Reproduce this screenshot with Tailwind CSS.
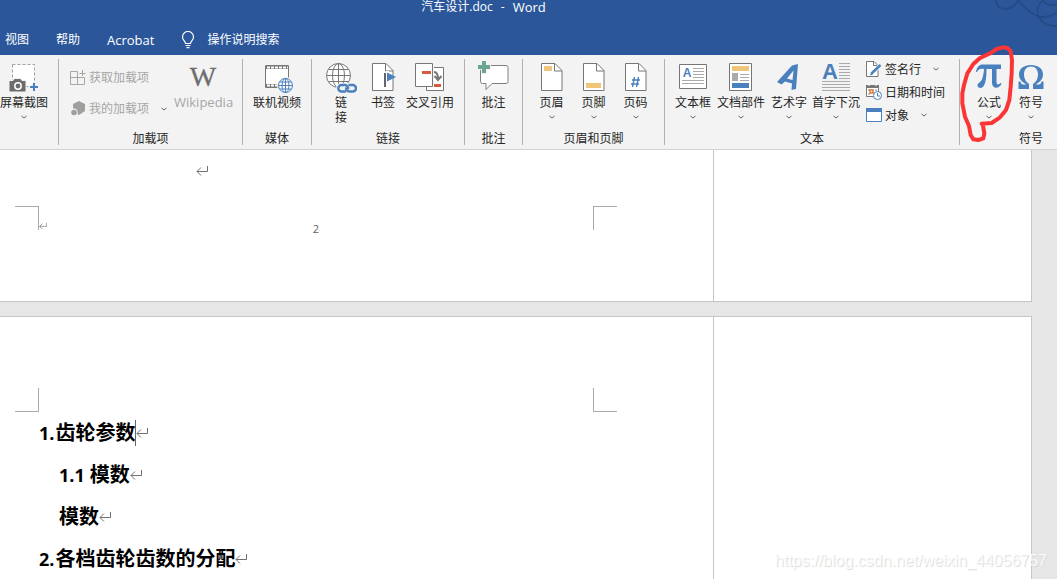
<!DOCTYPE html>
<html lang="zh-CN">
<head>
<meta charset="utf-8">
<meta name="viewport" content="width=device-width, initial-scale=1">
<title>汽车设计.doc - Word</title>
<script src="https://cdn.jsdelivr.net/npm/@tailwindcss/browser@4"></script>
</head>
<body class="relative flex h-screen flex-col overflow-hidden bg-[#e6e6e6] font-['Open_Sans','Noto_Sans_CJK_SC',sans-serif] text-xs text-[#262626]">

<svg class="hidden" aria-hidden="true">
  <symbol id="chev" viewBox="0 0 8 6"><path d="M1.500 2 4 4 6.500 2" fill="none" stroke="#666"/></symbol>
  <symbol id="ret" viewBox="0 0 12 12"><path d="M11.500 1v5.500H1M5 2.500 1 6.500l4 4" fill="none" stroke="#707070"/></symbol>
  <symbol id="page" viewBox="0 0 32 32"><path d="M5.500 2.500H19l7 7V29.500H5.500Z" fill="#fff" stroke="#777"/><path d="M18.500 2.500v7.500H26" fill="none" stroke="#777"/></symbol>
</svg>

<header class="relative h-[55px] shrink-0 overflow-hidden bg-[#2b579a] text-white">
  <svg class="absolute right-0 top-0 h-7 w-16" viewBox="0 0 64 28" fill="none" stroke="#244b86" stroke-width="1.800" aria-hidden="true">
    <path d="M3 0C3 6 7 9 13 9S24 4 25 0M25 0C32 9 42 17 50 17S60 15 64 13M50 0C40 10 44 26 64 26M50 0C52 5 59 6 64 4"/>
  </svg>
  <h1 class="flex h-[14px] items-center justify-center gap-2 pr-[90px] leading-[14px]"><span>汽车设计.doc</span><span>-</span><span class="text-[13px]">Word</span></h1>
  <nav class="flex items-center pl-[5px] pt-[17px] leading-[18px]">
    <button class="mr-[27px]">视图</button>
    <button class="mr-[27px]">帮助</button>
    <button class="mr-[27px] text-[13px]">Acrobat</button>
    <button class="flex items-center gap-3">
      <svg class="h-[18px] w-[14px]" viewBox="0 0 14 18" fill="none" stroke="#fff" stroke-width="1.200"><path d="M4.500 12.500C4.500 10 1.500 9.500 1.500 6a5.500 5.500 0 0 1 11 0c0 3.500-3 4-3 6.500ZM4.500 14.500h5M5.500 16.700h3"/></svg>
      操作说明搜索
    </button>
  </nav>
</header>

<section class="flex h-[95px] shrink-0 overflow-hidden border-b border-[#d2d2d2] bg-[#f3f3f3] py-1 leading-[15px]" aria-label="插入">

  <div class="flex w-[59px] shrink-0 flex-col border-r border-[#b1b1b1] pt-0.5">
    <button class="flex w-12 flex-col items-center gap-0.5 whitespace-nowrap">
      <svg class="size-8" viewBox="0 0 32 32"><path d="M4.500 3.500h22v22h-22z" fill="#fff" stroke="#a0a0a0" stroke-dasharray="3 2"/><path d="M1 19.500h4l1.500-2h6l1.500 2h4V31H1z" fill="#6d6d6d" stroke="#f3f3f3"/><circle cx="10" cy="25" r="3.200" fill="#6d6d6d" stroke="#fff" stroke-width="1.500"/><path d="M26 21.500v9M21.500 26h9" stroke="#f3f3f3" stroke-width="4"/><path d="M26 22v8M22 26h8" stroke="#4a80bd" stroke-width="2"/></svg>
      <span>屏幕截图</span>
      <svg class="mt-0.5 h-1.5 w-2"><use href="#chev"/></svg>
    </button>
  </div>

  <div class="flex w-[184px] shrink-0 flex-col border-r border-[#b1b1b1] pl-[11px] pt-0.5 text-[#a6a6a6]">
    <div class="flex">
      <div class="flex w-[104px] flex-col gap-4 pt-[9px]">
        <button class="flex items-center gap-[3px]" disabled>
          <svg class="h-[15px] w-4" viewBox="0 0 16 15" fill="none" stroke="#a6a6a6"><path d="M.500 1.500h7v13h-7zM.500 7.500h14M7.500 14.500h7v-7M12.500 0v6M9.500 3.500h6"/></svg>
          获取加载项
        </button>
        <button class="flex items-center gap-[3px]" disabled>
          <svg class="h-[15px] w-4" viewBox="0 0 16 15" fill="#a09e9f"><path d="M9 0l6 3v7l-6 4-1.500-1A4 4 0 0 0 3 7.500V3Z"/><circle cx="4" cy="11.500" r="2.800"/></svg>
          我的加载项
          <svg class="ml-2 h-1.5 w-2"><use href="#chev"/></svg>
        </button>
      </div>
      <button class="flex flex-col items-center gap-0.5" disabled>
        <svg class="size-8" viewBox="0 0 32 32"><text x="15" y="25" text-anchor="middle" font-family="Liberation Serif, serif" font-size="28" fill="#6d6d6d" stroke="#6d6d6d" stroke-width="0.300">W</text></svg>
        <span class="text-[13px]">Wikipedia</span>
      </button>
    </div>
    <h2 class="mt-auto pr-[11px] text-center leading-[13px] text-[#262626]">加载项</h2>
  </div>

  <div class="flex w-[69px] shrink-0 flex-col items-center border-r border-[#b1b1b1] pt-0.5">
    <button class="flex flex-col items-center gap-0.5">
      <svg class="size-8" viewBox="0 0 32 32"><path d="M4.500 4.500h23v22h-23z" fill="#fff" stroke="#777"/><path d="M5 6.500h22M5 24.500h22" stroke="#777" stroke-width="3"/><path d="M6 6.500h21M6 24.500h21" stroke="#fff" stroke-width="2" stroke-dasharray="3 1"/><circle cx="24.500" cy="24.500" r="8.500" fill="#f3f3f3"/><g fill="#fff" stroke="#4a80bd"><circle cx="24.500" cy="24.500" r="7"/><ellipse cx="24.500" cy="24.500" rx="3.500" ry="7"/><path d="M24.500 17.500v14M17.500 24.500h14M18.500 21h12M18.500 28h12" fill="none"/></g></svg>
      <span>联机视频</span>
    </button>
    <h2 class="mt-auto leading-[13px]">媒体</h2>
  </div>

  <div class="flex w-[153px] shrink-0 flex-col border-r border-[#b1b1b1] pt-0.5">
    <div class="flex pl-[13px]">
      <button class="flex w-8 flex-col items-center gap-0.5">
        <svg class="size-8" viewBox="0 0 32 32" fill="none"><g stroke="#777"><circle cx="13.500" cy="14.500" r="12" fill="#fff"/><ellipse cx="13.500" cy="14.500" rx="6" ry="12"/><path d="M13.500 2.500v24M1.500 14.500h24M3.500 8.500h20M3.500 20.500h20"/></g><path d="M16 22h12a5.500 5.500 0 0 1 0 11H17a5.500 5.500 0 0 1-1-11" fill="#f3f3f3"/><g stroke="#4a80bd" stroke-width="2.500"><path d="M21 30.500h-4.500a3.200 3.200 0 0 1 0-6.400H20a3.200 3.200 0 0 1 3 4"/><path d="M23.500 24.100h4.300a3.200 3.200 0 0 1 0 6.400h-3.500a3.200 3.200 0 0 1-3-4"/></g></svg>
        <span class="w-3">链接</span>
      </button>
      <button class="ml-[10px] flex w-8 flex-col items-center gap-0.5">
        <svg class="size-8" viewBox="0 0 32 32"><use href="#page"/><path d="M19 10h3v18h-3z" fill="#fff"/><path d="M17 12h2v14h-2z" fill="#666"/><path d="M20 11.500l9 4.500-9 4.500z" fill="#4a80bd"/></svg>
        <span>书签</span>
      </button>
      <button class="ml-[7px] flex w-12 flex-col items-center gap-0.5">
        <svg class="size-8" viewBox="0 0 32 32"><path d="M12.500 6.500h17v23h-17z" fill="#fff" stroke="#777"/><path d="M1.500 2.500h17v23h-17z" fill="#fff" stroke="#777"/><path d="M19.500 2v24" stroke="#f3f3f3"/><path d="M8 10h9v3H8zM20 23h7v3h-7z" fill="#d75b3f"/><path d="M20 11c3.500 0 4 3 4 7M20.500 15l3.500 4 3.500-4" fill="none" stroke="#777" stroke-width="2"/></svg>
        <span>交叉引用</span>
      </button>
    </div>
    <h2 class="mt-auto text-center leading-[13px]">链接</h2>
  </div>

  <div class="flex w-[58px] shrink-0 flex-col items-center border-r border-[#b1b1b1] pt-0.5">
    <button class="flex flex-col items-center gap-0.5">
      <svg class="size-8" viewBox="0 0 32 32"><path d="M4 4.500h24a2 2 0 0 1 2 2v14a2 2 0 0 1-2 2H14l-6 6v-6H4.500a2 2 0 0 1-2-2v-14Z" fill="#fff" stroke="#808080"/><path d="M6 -1v14M-1 6h14" stroke="#f3f3f3" stroke-width="6"/><path d="M6 0v12M0 6h12" stroke="#6ca593" stroke-width="4"/></svg>
      <span>批注</span>
    </button>
    <h2 class="mt-auto leading-[13px]">批注</h2>
  </div>

  <div class="flex w-[142px] shrink-0 flex-col border-r border-[#b1b1b1] pt-0.5">
    <div class="flex justify-center">
      <button class="flex w-[42px] flex-col items-center gap-0.5">
        <svg class="size-8" viewBox="0 0 32 32"><use href="#page"/><path d="M8 5h8v5H8z" fill="#efc579"/></svg>
        <span>页眉</span>
        <svg class="mt-0.5 h-1.5 w-2"><use href="#chev"/></svg>
      </button>
      <button class="flex w-[42px] flex-col items-center gap-0.5">
        <svg class="size-8" viewBox="0 0 32 32"><use href="#page"/><path d="M8 22h15v5H8z" fill="#efc579"/></svg>
        <span>页脚</span>
        <svg class="mt-0.5 h-1.5 w-2"><use href="#chev"/></svg>
      </button>
      <button class="flex w-[42px] flex-col items-center gap-0.5">
        <svg class="size-8" viewBox="0 0 32 32"><use href="#page"/><path d="M14.500 16l-2 10M18.500 16l-2 10M12 19h8M11 23h8" stroke="#4a80bd" stroke-width="1.400"/></svg>
        <span>页码</span>
        <svg class="mt-0.5 h-1.5 w-2"><use href="#chev"/></svg>
      </button>
    </div>
    <h2 class="mt-auto text-center leading-[13px]">页眉和页脚</h2>
  </div>

  <div class="flex w-[295px] shrink-0 flex-col border-r border-[#b1b1b1] pt-0.5">
    <div class="flex pl-1">
      <button class="flex w-12 flex-col items-center gap-0.5">
        <svg class="size-8" viewBox="0 0 32 32"><path d="M2.500 3.500h27v24h-27z" fill="#fff" stroke="#777"/><path d="M16 7.500h11M16 10.500h11M16 13.500h11M16 16.500h11M5 19.500h22M5 22.500h22" stroke="#aaa"/><text x="10" y="16" text-anchor="middle" font-family="Liberation Sans, sans-serif" font-size="12" font-weight="700" fill="#4a80bd">A</text></svg>
        <span>文本框</span>
        <svg class="mt-0.5 h-1.5 w-2"><use href="#chev"/></svg>
      </button>
      <button class="flex w-12 flex-col items-center gap-0.5">
        <svg class="size-8" viewBox="0 0 32 32"><path d="M4.500 2.500h22v27h-22z" fill="#fff" stroke="#777"/><path d="M7 5h17v5H7z" fill="#efc579"/><path d="M7 12h6v8H7z" fill="#aaa"/><path d="M15 13.500h9M15 16.500h9M15 19.500h9" stroke="#aaa"/><path d="M7 22h17v5H7z" fill="#4a80bd"/></svg>
        <span>文档部件</span>
        <svg class="mt-0.5 h-1.5 w-2"><use href="#chev"/></svg>
      </button>
      <button class="flex w-12 flex-col items-center gap-0.5">
        <svg class="size-8" viewBox="0 0 32 32"><path fill-rule="evenodd" d="M4 21 19 4.500 25 3 23 28l-4.500 1 .500-6.500-7-2-3.500 3ZM14 17.500l5.500 1.500L20.500 9.500Z" fill="#4a80bd"/></svg>
        <span>艺术字</span>
        <svg class="mt-0.5 h-1.5 w-2"><use href="#chev"/></svg>
      </button>
      <button class="flex w-[46px] flex-col items-center gap-0.5 whitespace-nowrap">
        <svg class="size-8" viewBox="0 0 32 32"><path d="M19 2.500h11M19 5.500h11M19 8.500h11M19 11.500h11M19 14.500h11M19 17.500h11M2 20.500h28M2 23.500h28M2 26.500h28M2 29.500h28" stroke="#aaa"/><text x="10" y="18" text-anchor="middle" font-family="Liberation Sans, sans-serif" font-size="22" font-weight="700" fill="#4a80bd">A</text></svg>
        <span>首字下沉</span>
        <svg class="mt-0.5 h-1.5 w-2"><use href="#chev"/></svg>
      </button>
      <div class="ml-[7px] flex flex-col items-start gap-[7px]">
        <button class="flex items-center gap-[3px]">
          <svg class="size-4" viewBox="0 0 16 16"><path d="M.500.500H8l4 4v11H.500z" fill="#fff" stroke="#777"/><path d="M7.500.500v4H12" fill="none" stroke="#777"/><path d="M5 13 14.500 4" stroke="#fff" stroke-width="4"/><path d="M5.500 12.500 14.500 4" stroke="#4a80bd" stroke-width="2.500"/><path d="M4 14.500l1-3 2 2z" fill="#4a80bd"/></svg>
          签名行
          <svg class="ml-2 h-1.5 w-2"><use href="#chev"/></svg>
        </button>
        <button class="flex items-center gap-[3px]">
          <svg class="size-4" viewBox="0 0 16 16"><path d="M.500 1.500h12v11H.500z" fill="#fff" stroke="#777"/><path d="M0 1h13v3H0z" fill="#777"/><path d="M3 0v2M10 0v2" stroke="#fff"/><path d="M2 6h2M9 6h2M2 10h2" stroke="#888"/><path d="M4 6h3v3H4z" fill="#fff" stroke="#d9752d" stroke-width="1.500"/><circle cx="11.500" cy="11.500" r="4" fill="#fff" stroke="#4a80bd"/><path d="M11.500 9v3H14" fill="none" stroke="#4a80bd"/></svg>
          日期和时间
        </button>
        <button class="flex items-center gap-[3px]">
          <svg class="size-4" viewBox="0 0 16 16"><path d="M.500 1.500h15v13H.500z" fill="#fff" stroke="#4a80bd"/><path d="M0 1h16v4H0z" fill="#4a80bd"/></svg>
          对象
          <svg class="ml-2 h-1.5 w-2"><use href="#chev"/></svg>
        </button>
      </div>
    </div>
    <h2 class="mt-auto text-center leading-[13px]">文本</h2>
  </div>

  <div class="flex w-[142px] shrink-0 flex-col pt-0.5">
    <div class="flex pl-2">
      <button class="flex w-[42px] flex-col items-center gap-0.5">
        <svg class="size-8" viewBox="0 0 32 32"><path d="M3 11C4 5 7 3.500 10 3.500H28V8H23.500V21c0 3 2.500 3 4 1l1 .600C27 28 19 28.500 19 22V8H13.500C13.500 17 12.500 27 7.500 27c-3.500 0-4-4-1-5.500C9.500 19.500 10.500 14 11 8 7.500 7.500 5.500 8 4 11Z" fill="#4a80bd"/></svg>
        <span>公式</span>
        <svg class="mt-0.5 h-1.5 w-2"><use href="#chev"/></svg>
      </button>
      <button class="flex w-[42px] flex-col items-center gap-0.5">
        <svg class="size-8" viewBox="0 0 32 32"><path d="M3.500 28V20.500H5.500C6 23 7 23.500 9 23.500H11.500C7 21 4 18 4 13.500 4 7.500 9 4 16 4s12 3.500 12 9.500c0 4.500-3 7.500-7.500 10H23c2 0 3-.500 3.500-3h2V28H18V23c3-2 5-5 5-9.500C23 8.500 20.500 5.500 16 5.500S9 8.500 9 13.500C9 18 11 21 14 23v5Z" fill="#4a80bd"/></svg>
        <span>符号</span>
        <svg class="mt-0.5 h-1.5 w-2"><use href="#chev"/></svg>
      </button>
    </div>
    <h2 class="mt-auto text-center leading-[13px]">符号</h2>
  </div>
</section>

<main class="flex min-h-0 flex-1 flex-col gap-[14px] pr-[25px]">
  <section class="flex h-[152px] shrink-0 border-b border-r border-[#c6c6c6] bg-white">
    <div class="flex-1 pl-[15px] pr-24 pt-[15px]">
      <svg class="ml-[181px] size-3"><use href="#ret"/></svg>
      <div class="mt-[29px] flex items-start justify-between">
        <div class="flex flex-1 items-end">
          <span class="size-6 border-r border-t border-[#ababab]"></span>
          <svg class="size-2"><use href="#ret"/></svg>
        </div>
        <p class="pt-[15px] text-[11px] leading-[15px] text-[#606060]">2</p>
        <div class="flex flex-1 justify-end">
          <span class="size-6 border-l border-t border-[#ababab]"></span>
        </div>
      </div>
    </div>
    <aside class="w-[318px] border-l border-[#c6c6c6]"></aside>
  </section>

  <section class="flex min-h-0 flex-1 border-r border-t border-[#c6c6c6] bg-white">
    <div class="flex-1 pl-[15px] pr-24 pt-[71px]">
      <div class="flex justify-between">
        <span class="size-6 border-b border-r border-[#ababab]"></span>
        <span class="size-6 border-b border-l border-[#ababab]"></span>
      </div>
      <article class="pl-6 text-xl font-bold leading-[42px] text-black">
        <h2 class="flex items-center"><span class="mr-px text-lg leading-[42px]">1.</span>齿轮参数<span class="h-[26px] w-px bg-[#666]"></span><svg class="size-3"><use href="#ret"/></svg></h2>
        <h3 class="flex items-center pl-5"><span class="mr-[5px] text-lg leading-[42px]">1.1</span>模数<svg class="size-3"><use href="#ret"/></svg></h3>
        <p class="flex items-center pl-5">模数<svg class="size-3"><use href="#ret"/></svg></p>
        <h2 class="flex items-center"><span class="mr-px text-lg leading-[42px]">2.</span>各档齿轮齿数的分配<svg class="size-3"><use href="#ret"/></svg></h2>
      </article>
    </div>
    <aside class="w-[318px] border-l border-[#c6c6c6]"></aside>
  </section>
</main>

<!-- Hand-drawn highlight around the formula button -->
<svg class="pointer-events-none absolute left-[850px] top-10 h-[115px] w-[207px]" viewBox="0 0 621 345" fill="none" stroke="#fb3535" stroke-width="12" stroke-linejoin="round" stroke-linecap="round" aria-hidden="true">
  <path d="M395 251 425 249 450 232 468 210 478 180 482 140 485 100 486 60 482 34 472 24 460 22 440 27 420 40 390 54 370 72 352 100 342 135 337 160 337 190 345 230 357 258 362 285 370 298 385 300 400 295 403 280 398 251"/>
</svg>
<p class="pointer-events-none absolute bottom-2 right-2.5 font-['Liberation_Sans',sans-serif] text-base leading-5 text-white/80 [text-shadow:1px_1px_1px_#d8d8d8]">https://blog.csdn.net/weixin_44056757</p>
</body>
</html>
